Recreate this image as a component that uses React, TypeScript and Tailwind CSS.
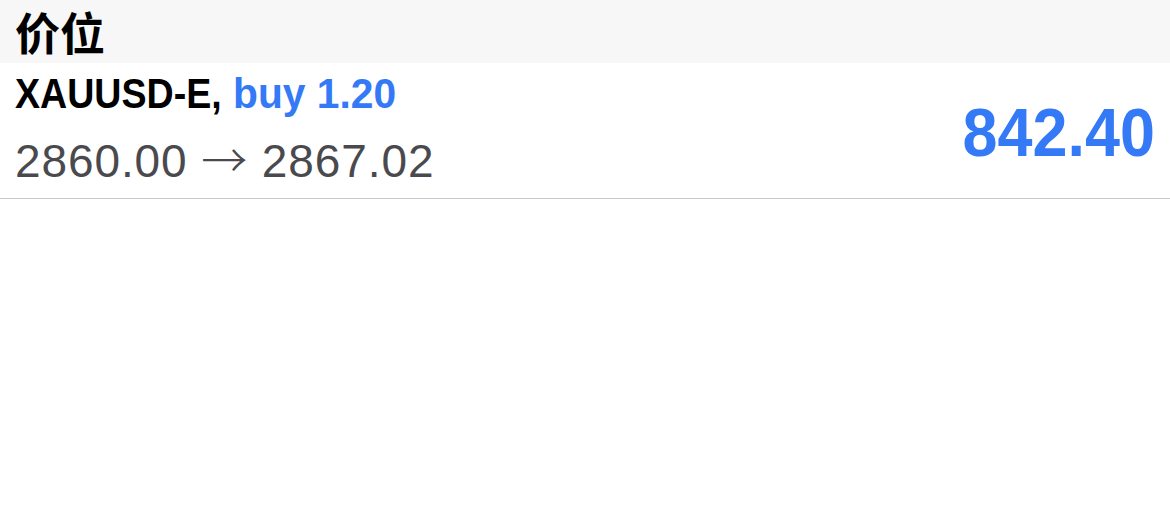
export default function App() {
  return (
    <div className="w-[1170px] h-[510px] bg-white" style={{ fontFamily: '"Liberation Sans", Arial, sans-serif' }}>
      <div className="h-[63px] bg-[#f7f7f7] flex items-center px-[15px]">
        <span className="text-[45px] font-bold text-black leading-none" style={{ fontFamily: '"Noto Sans CJK SC", sans-serif' }}>价位</span>
      </div>
      <div className="h-[136px] border-b border-[#c8c8c8] flex items-start justify-between pl-[15px] pr-[15px] pt-[10px]">
        <div className="flex flex-col gap-[19px]">
          <div className="flex h-[42px] text-[42px] font-bold leading-[42px] whitespace-nowrap">
            <span className="inline-block w-[218px]">
              <span className="inline-block origin-left scale-x-[0.895] text-black">XAUUSD-E,</span>
            </span>
            <span className="inline-block origin-left scale-x-[0.97] text-[#3479f5]">buy 1.20</span>
          </div>
          <div className="h-[47px] text-[46px] leading-[47px] tracking-[0.9px] text-[#4a4a4e] whitespace-nowrap">
            2860.00 <span className="font-light" style={{ fontFamily: '"Noto Sans CJK SC", sans-serif' }}>→</span> 2867.02
          </div>
        </div>
        <div className="mt-[25px] text-[68px] font-bold text-[#3479f5] leading-none origin-right scale-x-[0.925]">842.40</div>
      </div>
    </div>
  );
}
